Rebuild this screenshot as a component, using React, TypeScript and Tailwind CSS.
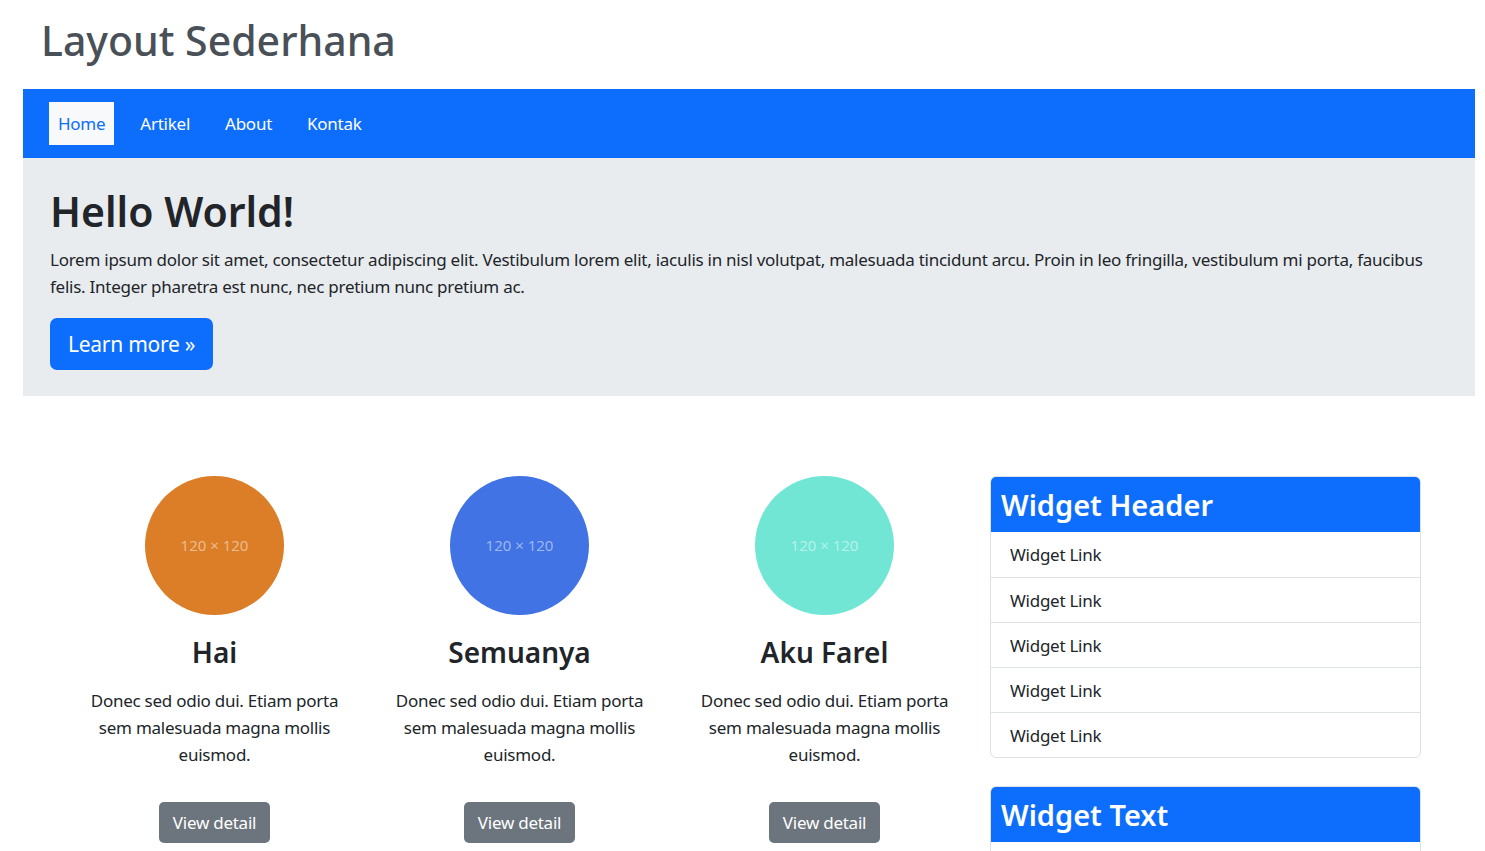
const features = [
  { title: "Hai", color: "bg-[#db7e27]" },
  { title: "Semuanya", color: "bg-[#4173e4]" },
  { title: "Aku Farel", color: "bg-[#72e6d5]" },
];

const links = ["Widget Link", "Widget Link", "Widget Link", "Widget Link", "Widget Link"];

const App = () => {
  return (
    <div className="min-h-screen bg-white text-[#212529] font-['Noto_Sans',sans-serif] text-[17px] leading-[27px] tracking-[-0.015em]">
      <div className="ml-[23px] w-[1452px]">
        <div className="h-[89px] pt-[13px] pl-[18px]">
          <h1 className="text-[41px] leading-[54px] font-medium tracking-normal text-[#495057]">Layout Sederhana</h1>
        </div>

        <nav className="h-[69px] bg-[#0d6efd] flex items-center pl-[26px] gap-[17px]">
          <a className="h-[43px] px-[9px] flex items-center bg-[#f8f9fa] text-[#0d6efd]">Home</a>
          <a className="px-[9px] text-white">Artikel</a>
          <a className="px-[9px] text-white">About</a>
          <a className="px-[9px] text-white">Kontak</a>
        </nav>

        <div className="bg-[#e9ecef] px-[27px] pt-[26px] pb-[26px]">
          <h1 className="text-[41px] leading-[54px] font-semibold tracking-normal mb-[8px]">Hello World!</h1>
          <p className="mb-[18px]">
            Lorem ipsum dolor sit amet, consectetur adipiscing elit. Vestibulum lorem elit, iaculis in nisl volutpat, malesuada tincidunt arcu. Proin in leo fringilla, vestibulum mi porta, faucibus
            <br />
            felis. Integer pharetra est nunc, nec pretium nunc pretium ac.
          </p>
          <button className="h-[52px] px-[18px] rounded-[7px] bg-[#0d6efd] text-white text-[21px]">Learn more »</button>
        </div>
      </div>

      <div className="flex pl-[62px] pt-[80px] gap-[13px]">
        <div className="flex">
          {features.map((f) => (
            <div key={f.title} className="w-[305px] flex flex-col items-center text-center">
              <div className={`w-[139px] h-[139px] rounded-full ${f.color} flex items-center justify-center`}>
                <span className="text-[15px] text-white/50 tracking-normal font-['Open_Sans',sans-serif]">120 × 120</span>
              </div>
              <h2 className="mt-[18px] text-[28px] leading-[38px] font-semibold tracking-normal">{f.title}</h2>
              <p className="mt-[16px] w-[275px]">Donec sed odio dui. Etiam porta sem malesuada magna mollis euismod.</p>
              <button className="mt-[34px] h-[41px] px-[14px] rounded-[5px] bg-[#6c757d] text-white">View detail</button>
            </div>
          ))}
        </div>

        <div className="w-[431px] flex flex-col gap-[28px]">
          <div className="border border-[#dee2e6] rounded-[6px] overflow-hidden">
            <div className="h-[55px] bg-[#0d6efd] text-white px-[10px] flex items-center text-[29px] font-semibold tracking-normal">Widget Header</div>
            {links.map((l, i) => (
              <div key={i} className={`h-[45px] flex items-center px-[19px] ${i > 0 ? "border-t border-[#dee2e6]" : ""}`}>
                {l}
              </div>
            ))}
          </div>
          <div className="border border-[#dee2e6] rounded-[6px] overflow-hidden">
            <div className="h-[55px] bg-[#0d6efd] text-white px-[10px] flex items-center text-[29px] font-semibold tracking-normal">Widget Text</div>
            <div className="h-[80px]" />
          </div>
        </div>
      </div>
    </div>
  );
};

export default App;
